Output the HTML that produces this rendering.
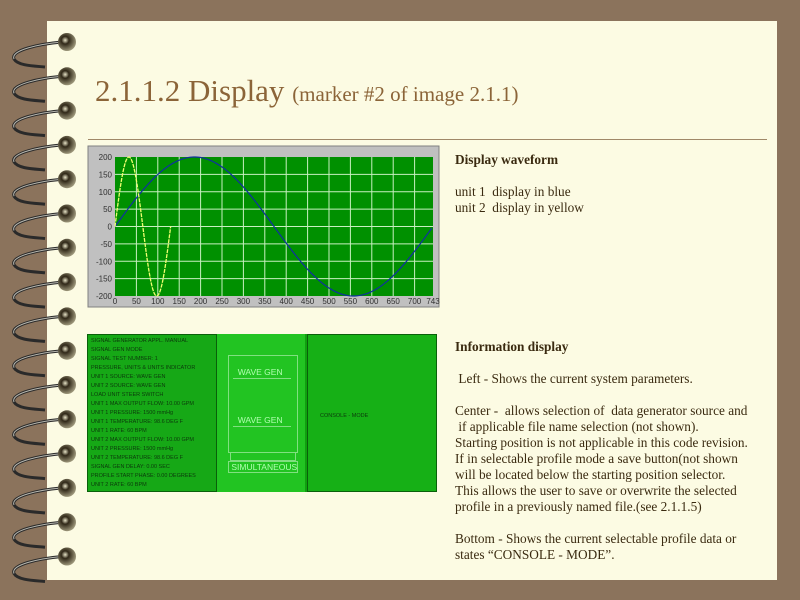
<!DOCTYPE html>
<html><head><meta charset="utf-8"><style>
body{margin:0;width:800px;height:600px;background:#8b735c;position:relative;overflow:hidden;font-family:"Liberation Serif",serif;}
.page{position:absolute;left:47px;top:21px;width:730px;height:559px;background:#fcfbe3;}
h1{position:absolute;left:95px;top:73px;margin:0;font-weight:normal;color:#8b6438;font-size:31px;white-space:nowrap;}
h1 small{font-size:21px;}
.rule{position:absolute;left:88px;top:139px;width:679px;height:1px;background:#a08868;}
.txt{position:absolute;left:455px;color:#3a2a10;font-size:13.3px;line-height:16px;white-space:nowrap;}
.gp{position:absolute;font-family:"Liberation Sans",sans-serif;font-size:5.5px;color:#0c3a0c;line-height:9px;white-space:nowrap;}
</style></head><body>
<div class="page"></div>
<svg width="800" height="600" style="position:absolute;left:0;top:0" id="rings"></svg>
<h1>2.1.1.2 Display <small>(marker #2 of image 2.1.1)</small></h1>
<div class="rule"></div>
<svg width="800" height="600" style="position:absolute;left:0;top:0" id="chart"></svg>
<div style="position:absolute;left:87px;top:334px;width:350px;height:158px;background:#10a010;">
 <div style="position:absolute;left:0;top:0;width:128px;height:156px;background:#16a816;border:1px solid #0a600a;border-right:2px solid #0a600a"></div>
 <div style="position:absolute;left:130px;top:0;width:88px;height:158px;background:#22c422;"></div>
 <div style="position:absolute;left:220px;top:0;width:128px;height:156px;background:#16b016;border:1px solid #0a600a;"></div>
 <div class="gp" style="left:4px;top:3px">SIGNAL GENERATOR APPL. MANUAL<br>SIGNAL GEN MODE<br>SIGNAL TEST NUMBER: 1<br>PRESSURE, UNITS &amp; UNITS INDICATOR<br>UNIT 1 SOURCE: WAVE GEN<br>UNIT 2 SOURCE: WAVE GEN<br>LOAD UNIT STEER SWITCH<br>UNIT 1 MAX OUTPUT FLOW: 10.00 GPM<br>UNIT 1 PRESSURE: 1500 mmHg<br>UNIT 1 TEMPERATURE: 98.6 DEG F<br>UNIT 1 RATE: 60 BPM<br>UNIT 2 MAX OUTPUT FLOW: 10.00 GPM<br>UNIT 2 PRESSURE: 1500 mmHg<br>UNIT 2 TEMPERATURE: 98.6 DEG F<br>SIGNAL GEN DELAY: 0.00 SEC<br>PROFILE START PHASE: 0.00 DEGREES<br>UNIT 2 RATE: 60 BPM</div>
 <div style="position:absolute;left:141px;top:21px;width:68px;height:96px;border:1px solid #80e080;"></div>
 <div style="position:absolute;left:146px;top:33px;width:58px;height:11px;border-bottom:1px solid #80e080;color:#b0ffb0;font-size:8.5px;font-family:'Liberation Sans',sans-serif;line-height:11px">&nbsp;&nbsp;WAVE GEN</div>
 <div style="position:absolute;left:146px;top:81px;width:58px;height:11px;border-bottom:1px solid #80e080;color:#b0ffb0;font-size:8.5px;font-family:'Liberation Sans',sans-serif;line-height:11px">&nbsp;&nbsp;WAVE GEN</div>
 <div style="position:absolute;left:143px;top:118px;width:64px;height:7px;border:1px solid #80e080;"></div>
 <div style="position:absolute;left:141px;top:127px;width:68px;height:10px;border:1px solid #80e080;color:#b0ffb0;font-size:8.5px;font-family:'Liberation Sans',sans-serif;line-height:10px">&nbsp;SIMULTANEOUS</div>
 <div class="gp" style="left:233px;top:78px">CONSOLE - MODE</div>
</div>
<div class="txt" style="top:152px"><b>Display waveform</b><br><br>unit 1&nbsp; display in blue<br>unit 2&nbsp; display in yellow</div>
<div class="txt" style="top:339px"><b>Information display</b><br><br>&nbsp;Left - Shows the current system parameters.<br><br>Center -&nbsp; allows selection of&nbsp; data generator source and<br>&nbsp;if applicable file name selection (not shown).<br>Starting position is not applicable in this code revision.<br>If in selectable profile mode a save button(not shown<br>will be located below the starting position selector.<br>This allows the user to save or overwrite the selected<br>profile in a previously named file.(see 2.1.1.5)<br><br>Bottom - Shows the current selectable profile data or<br>states “CONSOLE - MODE”.</div>
<script>
var r='<defs><radialGradient id="b" cx="40%" cy="40%" r="60%"><stop offset="0" stop-color="#e8e4c8"/><stop offset="0.35" stop-color="#302818"/><stop offset="1" stop-color="#9a9478"/></radialGradient></defs>';
for(var i=0;i<16;i++){var y=42+i*34.3;
r+='<path d="M62 '+y+' C40 '+(y+2)+' 10 '+(y+8)+' 14 '+(y+17)+' C18 '+(y+24)+' 35 '+(y+24)+' 45 '+(y+25)+'" fill="none" stroke="#2a2a2a" stroke-width="3"/>';
r+='<path d="M62 '+y+' C40 '+(y+2)+' 10 '+(y+8)+' 14 '+(y+17)+'" fill="none" stroke="#b8b8b0" stroke-width="1"/>';
r+='<circle cx="67" cy="'+y+'" r="9" fill="url(#b)"/>';}
document.getElementById('rings').innerHTML=r;
var s='<rect x="88" y="146" width="351" height="161" fill="#c0c0c0" stroke="#808080"/><rect x="115" y="157" width="318" height="139" fill="#009000"/>';
function px(x){return 115+x/743*318}function py(y){return 157+(200-y)/400*139}
for(var x=50;x<743;x+=50)s+='<line x1="'+px(x)+'" y1="157" x2="'+px(x)+'" y2="296" stroke="#c8f0c0" stroke-width="1"/>';
for(var y=-150;y<200;y+=50)s+='<line x1="115" y1="'+py(y)+'" x2="433" y2="'+py(y)+'" stroke="#c8f0c0" stroke-width="1"/>';
var p='';for(var x=0;x<=743;x+=4)p+=px(x)+','+py(200*Math.sin(2*Math.PI*x/743))+' ';
s+='<polyline points="'+p+'" fill="none" stroke="#1030a0" stroke-width="1.2"/>';
p='';for(var x=0;x<=130;x+=1)p+=px(x)+','+py(200*Math.sin(2*Math.PI*x/130))+' ';
s+='<polyline points="'+p+'" fill="none" stroke="#f0ff70" stroke-width="1.3" stroke-dasharray="4,1"/>';
var yl=[200,150,100,50,0,-50,-100,-150,-200];
yl.forEach(function(v){s+='<text x="112" y="'+(py(v)+3)+'" font-size="8" text-anchor="end" fill="#303030" font-family="Liberation Sans">'+v+'</text>'});
for(var x=0;x<=700;x+=50)s+='<text x="'+px(x)+'" y="304" font-size="8" text-anchor="middle" fill="#303030" font-family="Liberation Sans">'+x+'</text>';
s+='<text x="'+px(743)+'" y="304" font-size="8" text-anchor="middle" fill="#303030" font-family="Liberation Sans">743</text>';
document.getElementById('chart').innerHTML=s;
</script>
</body></html>
